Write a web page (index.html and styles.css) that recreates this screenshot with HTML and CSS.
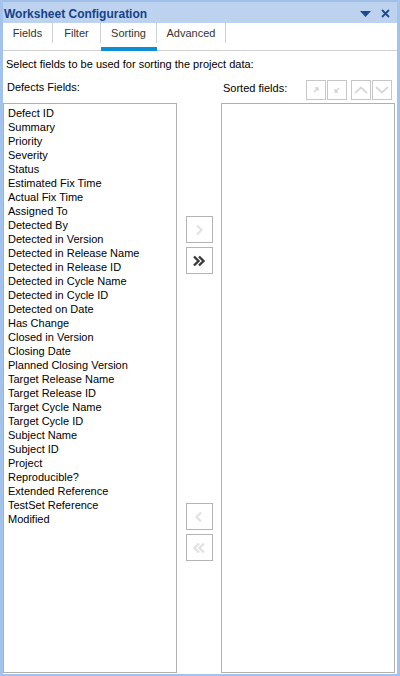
FILE: index.html
```html
<!DOCTYPE html>
<html lang="en">

<head>
    <meta charset="UTF-8" />
    <meta name="viewport" content="width=device-width, initial-scale=1.0" />
    <title>Worksheet Configuration</title>
    <link rel="stylesheet" href="styles.css">
</head>

<body>
    <div class="panel">

        <div class="titlebar">
            <span class="title">Worksheet Configuration</span>
            <span class="title-icons">
                <svg width="11" height="6" viewBox="0 0 11 6"><polygon points="0,0 11,0 5.5,6" fill="#1f4a8c" /></svg>
                <svg width="9" height="9" viewBox="0 0 9 9"><path d="M1 1L8 8M8 1L1 8" stroke="#1f4a8c" stroke-width="1.8" /></svg>
            </span>
        </div>

        <div class="tabs">
            <div class="tab tab-fields"><span>Fields</span></div>
            <div class="tab tab-filter"><span>Filter</span></div>
            <div class="tab tab-sorting active"><span>Sorting</span></div>
            <div class="tab tab-advanced"><span>Advanced</span></div>
        </div>

        <div class="content">
            <p class="intro">Select fields to be used for sorting the project data:</p>

            <div class="columns">
                <div class="col-head left-head">Defects Fields:</div>
                <div></div>
                <div class="col-head right-head">
                    <span>Sorted fields:</span>
                    <span class="tool-group">
                        <button class="tool-btn">
                            <svg width="8" height="8" viewBox="0 0 8 8"><path d="M2 6L6 2M3 2H6V5" stroke="#d4d4d4" stroke-width="1.3" fill="none" /></svg>
                        </button>
                        <button class="tool-btn">
                            <svg width="8" height="8" viewBox="0 0 8 8"><path d="M6 2L2 6M2 3V6H5" stroke="#d4d4d4" stroke-width="1.3" fill="none" /></svg>
                        </button>
                    </span>
                    <span class="tool-group">
                        <button class="tool-btn">
                            <svg width="14" height="8" viewBox="0 0 14 8"><path d="M1 7L7 1.5L13 7" stroke="#d8d8d8" stroke-width="2" fill="none" /></svg>
                        </button>
                        <button class="tool-btn">
                            <svg width="14" height="8" viewBox="0 0 14 8"><path d="M1 1L7 6.5L13 1" stroke="#d8d8d8" stroke-width="2" fill="none" /></svg>
                        </button>
                    </span>
                </div>

                <ul class="listbox" id="defect-fields"></ul>

                <div class="movers">
                    <div class="mover-group">
                        <button class="move-btn">
                            <svg width="10" height="12" viewBox="0 0 10 12"><path d="M3 1.5L7.5 6L3 10.5" stroke="#e2e2e2" stroke-width="2.2" fill="none" /></svg>
                        </button>
                        <button class="move-btn">
                            <svg width="14" height="12" viewBox="0 0 14 12"><path d="M2 1.5L6.5 6L2 10.5M7 1.5L11.5 6L7 10.5" stroke="#3a3a3a" stroke-width="2.4" fill="none" /></svg>
                        </button>
                    </div>
                    <div class="mover-group">
                        <button class="move-btn">
                            <svg width="10" height="12" viewBox="0 0 10 12"><path d="M7 1.5L2.5 6L7 10.5" stroke="#e2e2e2" stroke-width="2.2" fill="none" /></svg>
                        </button>
                        <button class="move-btn">
                            <svg width="14" height="12" viewBox="0 0 14 12"><path d="M7 1.5L2.5 6L7 10.5M12 1.5L7.5 6L12 10.5" stroke="#e2e2e2" stroke-width="2.4" fill="none" /></svg>
                        </button>
                    </div>
                </div>

                <ul class="listbox" id="sorted-fields"></ul>
            </div>
        </div>
    </div>

    <script>
        const fields = [
            'Defect ID', 'Summary', 'Priority', 'Severity', 'Status',
            'Estimated Fix Time', 'Actual Fix Time', 'Assigned To', 'Detected By',
            'Detected in Version', 'Detected in Release Name', 'Detected in Release ID',
            'Detected in Cycle Name', 'Detected in Cycle ID', 'Detected on Date',
            'Has Change', 'Closed in Version', 'Closing Date', 'Planned Closing Version',
            'Target Release Name', 'Target Release ID', 'Target Cycle Name', 'Target Cycle ID',
            'Subject Name', 'Subject ID', 'Project', 'Reproducible?', 'Extended Reference',
            'TestSet Reference', 'Modified'
        ];

        const list = document.getElementById('defect-fields');
        fields.forEach(name => {
            const li = document.createElement('li');
            li.textContent = name;
            list.appendChild(li);
        });
    </script>
</body>

</html>
```

FILE: styles.css
```css
* {
    box-sizing: border-box;
}

body {
    margin: 0;
    font-family: "Liberation Sans", Arial, sans-serif;
    font-size: 11px;
    color: #000;
    background-color: #fff;
}

.panel {
    width: 400px;
    height: 676px;
    display: flex;
    flex-direction: column;
    border-left: 3px solid #a3c3ec;
    border-right: 3px solid #a3c3ec;
    border-bottom: 2px solid #a3c3ec;
    background-color: #fff;
}

.titlebar {
    height: 23px;
    display: flex;
    align-items: center;
    justify-content: space-between;
    padding: 2px 7px 0 1px;
    border-top: 2px solid #a0bfe8;
    background-color: #bcd2ee;
}

.title {
    font-size: 12px;
    font-weight: bold;
    color: #15428b;
}

.title-icons {
    display: flex;
    align-items: center;
    gap: 10px;
}

/* tabs */
.tabs {
    display: flex;
    height: 28px;
    border-bottom: 1px solid #d0d0d0;
}

.tab {
    height: 27px;
    color: #333;
}

.tab span {
    display: flex;
    align-items: center;
    justify-content: center;
    height: 20px;
    padding-bottom: 1px;
    border-right: 1px solid #cfcfcf;
}

.tab-fields { width: 50px; }
.tab-filter { width: 48px; }
.tab-sorting { width: 56px; }
.tab-advanced { width: 69px; }

.tab.active {
    height: 28px;
    margin-bottom: -1px;
    border-bottom: 4px solid #0c8fd3;
}

.tab.active span {
    border-left: 1px solid #cfcfcf;
    margin-left: -1px;
}

/* content */
.content {
    flex: 1;
    display: flex;
    flex-direction: column;
    padding: 6px 2px 1px 0;
    min-height: 0;
}

.intro {
    margin: 0 0 8px 3px;
    line-height: 14px;
}

.columns {
    flex: 1;
    display: grid;
    grid-template-columns: 174px 44px 174px;
    grid-template-rows: 20px 1fr;
    row-gap: 4px;
    min-height: 0;
}

.col-head {
    line-height: 14px;
    padding-top: 1px;
}

.left-head {
    padding-left: 4px;
}

.right-head {
    display: flex;
    align-items: flex-start;
    padding-left: 2px;
    padding-right: 3px;
}

.right-head > span:first-child {
    flex: 1;
    padding-top: 1px;
}

.tool-group {
    display: flex;
    gap: 1px;
    margin-left: 4px;
}

.tool-btn,
.move-btn {
    display: flex;
    align-items: center;
    justify-content: center;
    padding: 0;
    background-color: #fff;
    border: 1px solid #c6c6c6;
    border-radius: 0;
}

.tool-btn {
    width: 20px;
    height: 20px;
}

.listbox {
    list-style: none;
    margin: 0;
    padding: 2px 4px;
    border: 1px solid #b0b0b0;
    background-color: #fff;
    overflow: hidden;
}

.listbox li {
    line-height: 14px;
    white-space: nowrap;
}

.movers {
    display: flex;
    flex-direction: column;
    justify-content: space-between;
    align-items: center;
    padding: 113px 0 112px;
}

.mover-group {
    display: flex;
    flex-direction: column;
    gap: 4px;
}

.move-btn {
    width: 27px;
    height: 27px;
    border-color: #b4b4b4;
}
```
